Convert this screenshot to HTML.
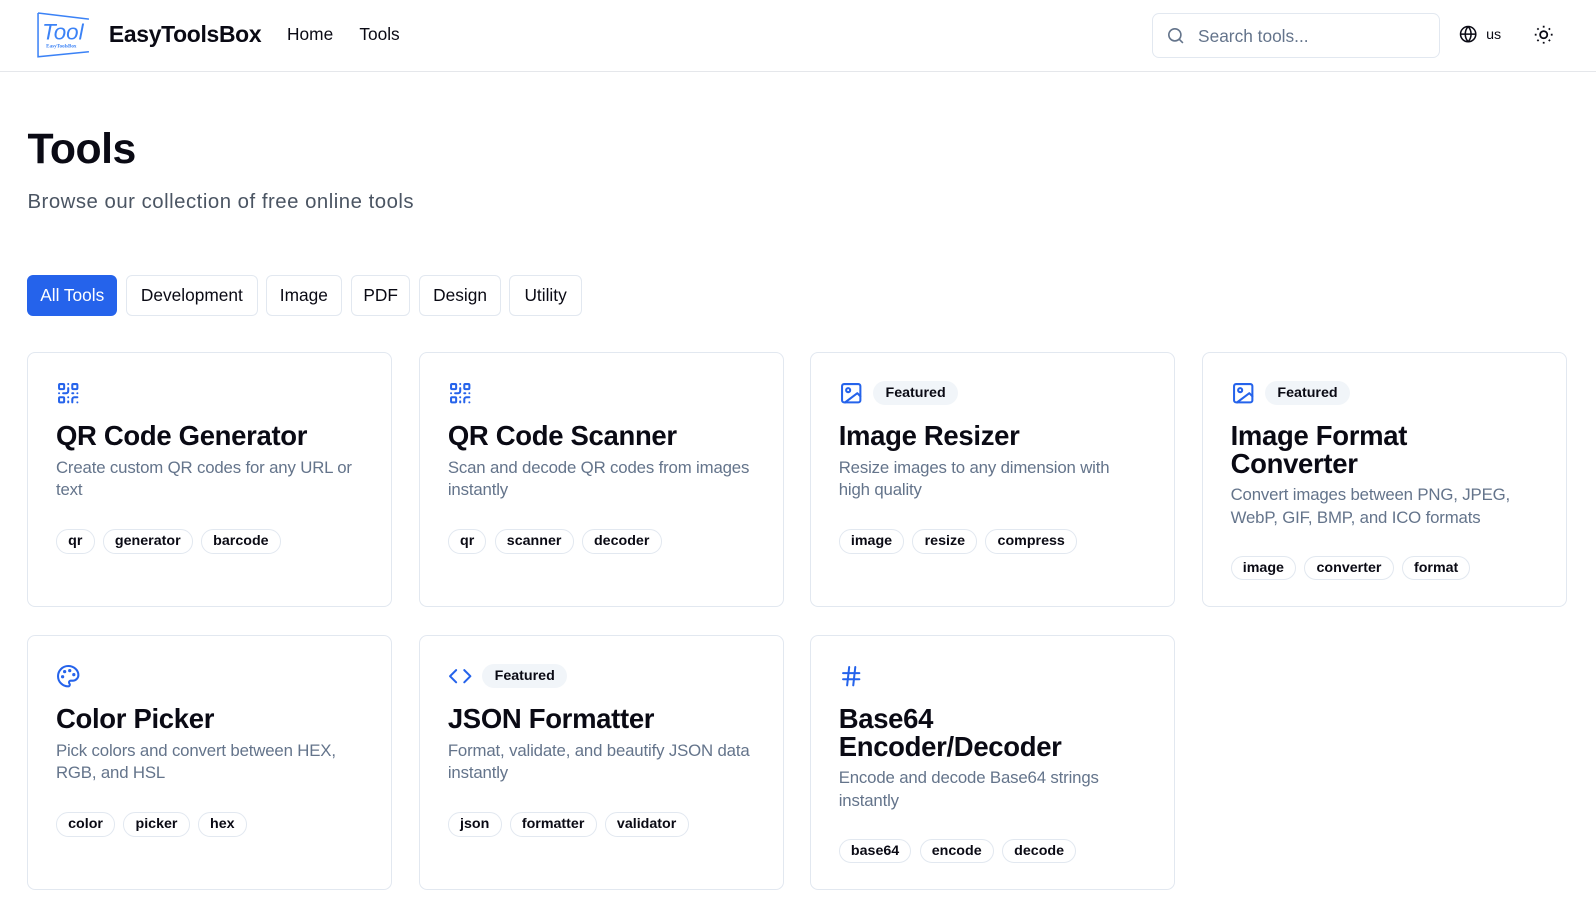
<!DOCTYPE html>
<html><head><meta charset="utf-8"><style>
*{box-sizing:border-box;margin:0;padding:0}
html,body{width:1596px;height:906px;overflow:hidden;background:#fff}
body{font-family:"Liberation Sans",sans-serif;color:#0a0a14}
.wrap{position:relative;width:1568px;height:890px;zoom:1.0179}
.hdr{position:absolute;left:0;top:0;width:1568px;height:71px;border-bottom:1px solid #e5e7eb}
.logo{position:absolute;left:35px;top:11px}
.brand{position:absolute;left:107px;top:21px;font-size:22.5px;font-weight:bold;letter-spacing:-0.3px}
.nav{position:absolute;top:24px;font-size:17px}
.search{position:absolute;left:1132px;top:13px;width:283px;height:44px;border:1px solid #e2e8f0;border-radius:7px}
.search span{position:absolute;left:44px;top:12px;font-size:17px;color:#64748b}
h1{position:absolute;left:27px;top:123px;font-size:42px;font-weight:bold;letter-spacing:-0.5px}
.sub{position:absolute;left:27px;top:188px;font-size:20px;letter-spacing:0.5px;color:#4b5563}
.btn{position:absolute;top:270px;height:40px;border:1px solid #e2e8f0;border-radius:6px;font-size:17px;line-height:38px;text-align:center}
.card{position:absolute;width:358px;height:250px;border:1px solid #e2e8f0;border-radius:8px;padding:27px 27px}
.card svg.ic{display:block}
.top{height:24px;display:flex;align-items:center;gap:10px}
.feat{background:#f1f5f9;border-radius:12px;font-size:14px;font-weight:bold;padding:3px 12px;height:24px;line-height:18px}
.t{font-size:27px;font-weight:bold;line-height:27px;margin-top:17px;letter-spacing:-0.3px}
.d{font-size:16.5px;letter-spacing:-0.15px;color:#64748b;line-height:22px;margin-top:7px;margin-right:-8px}
.tags{position:absolute;left:27px;display:flex;gap:8px}
.tag{border:1px solid #e2e8f0;border-radius:12px;font-size:14px;font-weight:bold;height:24px;line-height:22px;padding:0 11px}
</style></head><body><div class="wrap">
<div class="hdr">
<svg class="logo" width="56" height="47" viewBox="0 0 56 47"><path d="M2 2 L52 8 M2 2 L2 45 L52 40" fill="none" stroke="#3b82f6" stroke-width="1.5"/><text x="6" y="28" font-size="22" font-style="italic" fill="#3b82f6" font-family="Liberation Sans">Tool</text><text x="10" y="36" font-size="5" fill="#3b82f6" font-family="Liberation Serif" font-weight="bold">EasyToolsBox</text></svg>
<div class="brand">EasyToolsBox</div>
<div class="nav" style="left:282px">Home</div>
<div class="nav" style="left:353px">Tools</div>
<div class="search"><svg style="position:absolute;left:13px;top:12px" width="19" height="19" viewBox="0 0 24 24" fill="none" stroke="#64748b" stroke-width="2"><circle cx="11" cy="11" r="7.5"/><path d="M21 21l-4.5-4.5"/></svg><span>Search tools...</span></div>
<svg style="position:absolute;left:1433px;top:25px" width="18" height="18" viewBox="0 0 24 24" fill="none" stroke="#0a0a14" stroke-width="2"><circle cx="12" cy="12" r="10"/><path d="M2 12h20M12 2a15 15 0 0 1 0 20M12 2a15 15 0 0 0 0 20"/></svg>
<div style="position:absolute;left:1460px;top:27px;font-size:14px">us</div>
<svg style="position:absolute;left:1506px;top:24px" width="21" height="21" viewBox="0 0 24 24" fill="none" stroke="#0a0a14" stroke-width="2"><circle cx="12" cy="12" r="4"/><path d="M12 2v2M12 20v2M4.9 4.9l1.4 1.4M17.7 17.7l1.4 1.4M2 12h2M20 12h2M6.3 17.7l-1.4 1.4M19.1 4.9l-1.4 1.4"/></svg>
</div>
<h1>Tools</h1>
<div class="sub">Browse our collection of free online tools</div>
<div class="btn" style="left:27px;width:88px;background:#2563eb;border-color:#2563eb;color:#fff">All Tools</div>
<div class="btn" style="left:124px;width:129px">Development</div>
<div class="btn" style="left:261px;width:75px">Image</div>
<div class="btn" style="left:345px;width:58px">PDF</div>
<div class="btn" style="left:412px;width:80px">Design</div>
<div class="btn" style="left:500px;width:72px">Utility</div>

<svg width="0" height="0" style="position:absolute"><defs>
<g id="qr" fill="none" stroke="#2563eb" stroke-width="2" stroke-linecap="round"><rect x="3" y="3" width="5" height="5" rx="1"/><rect x="16" y="3" width="5" height="5" rx="1"/><rect x="3" y="16" width="5" height="5" rx="1"/><path d="M21 16h-3a2 2 0 0 0-2 2v3M21 21v.01M12 7v3a2 2 0 0 1-2 2H7M3 12h.01M12 3h.01M12 16v.01M16 12h1M21 12v.01M12 21v-1"/></g>
<g id="img" fill="none" stroke="#2563eb" stroke-width="2" stroke-linecap="round" stroke-linejoin="round"><rect x="3" y="3" width="18" height="18" rx="2"/><circle cx="9" cy="9" r="2"/><path d="M21 15l-3-3L6 21"/></g>
</defs></svg>

<div class="card" style="left:27px;top:346px"><div class="top"><svg class="ic" width="24" height="24"><use href="#qr"/></svg></div><div class="t">QR Code Generator</div><div class="d">Create custom QR codes for any URL or text</div>
<div class="tags" style="top:173px"><span class="tag">qr</span><span class="tag">generator</span><span class="tag">barcode</span></div></div>

<div class="card" style="left:412px;top:346px"><div class="top"><svg class="ic" width="24" height="24"><use href="#qr"/></svg></div><div class="t">QR Code Scanner</div><div class="d">Scan and decode QR codes from images instantly</div>
<div class="tags" style="top:173px"><span class="tag">qr</span><span class="tag">scanner</span><span class="tag">decoder</span></div></div>

<div class="card" style="left:796px;top:346px"><div class="top"><svg class="ic" width="24" height="24"><use href="#img"/></svg><span class="feat">Featured</span></div><div class="t">Image Resizer</div><div class="d">Resize images to any dimension with<br>high quality</div>
<div class="tags" style="top:173px"><span class="tag">image</span><span class="tag">resize</span><span class="tag">compress</span></div></div>

<div class="card" style="left:1181px;top:346px"><div class="top"><svg class="ic" width="24" height="24"><use href="#img"/></svg><span class="feat">Featured</span></div><div class="t">Image Format Converter</div><div class="d">Convert images between PNG, JPEG, WebP, GIF, BMP, and ICO formats</div>
<div class="tags" style="top:199px"><span class="tag">image</span><span class="tag">converter</span><span class="tag">format</span></div></div>

<div class="card" style="left:27px;top:624px"><div class="top"><svg class="ic" width="24" height="24" viewBox="0 0 24 24" fill="none" stroke="#2563eb" stroke-width="2"><circle cx="13.5" cy="6.5" r=".6" fill="#2563eb"/><circle cx="17.5" cy="10.5" r=".6" fill="#2563eb"/><circle cx="8.5" cy="7.5" r=".6" fill="#2563eb"/><circle cx="6.5" cy="12.5" r=".6" fill="#2563eb"/><path d="M12 2C6.5 2 2 6.5 2 12s4.5 10 10 10c.9 0 1.600-.7 1.6-1.7 0-.4-.2-.8-.4-1.1-.3-.3-.4-.7-.4-1.1a1.6 1.6 0 0 1 1.6-1.7h2c3.1 0 5.6-2.5 5.6-5.6C22 6 17.5 2 12 2z"/></svg></div><div class="t">Color Picker</div><div class="d">Pick colors and convert between HEX, RGB, and HSL</div>
<div class="tags" style="top:173px"><span class="tag">color</span><span class="tag">picker</span><span class="tag">hex</span></div></div>

<div class="card" style="left:412px;top:624px"><div class="top"><svg class="ic" width="24" height="24" viewBox="0 0 24 24" fill="none" stroke="#2563eb" stroke-width="2" stroke-linecap="round" stroke-linejoin="round"><path d="M8 6l-6 6 6 6M16 6l6 6-6 6"/></svg><span class="feat">Featured</span></div><div class="t">JSON Formatter</div><div class="d">Format, validate, and beautify JSON data instantly</div>
<div class="tags" style="top:173px"><span class="tag">json</span><span class="tag">formatter</span><span class="tag">validator</span></div></div>

<div class="card" style="left:796px;top:624px"><div class="top"><svg class="ic" width="24" height="24" viewBox="0 0 24 24" fill="none" stroke="#2563eb" stroke-width="2" stroke-linecap="round"><path d="M4 9h16M4 15h16M10 3L8 21M16 3l-2 18"/></svg></div><div class="t">Base64 Encoder/Decoder</div><div class="d">Encode and decode Base64 strings instantly</div>
<div class="tags" style="top:199px"><span class="tag">base64</span><span class="tag">encode</span><span class="tag">decode</span></div></div>
</div></body></html>
